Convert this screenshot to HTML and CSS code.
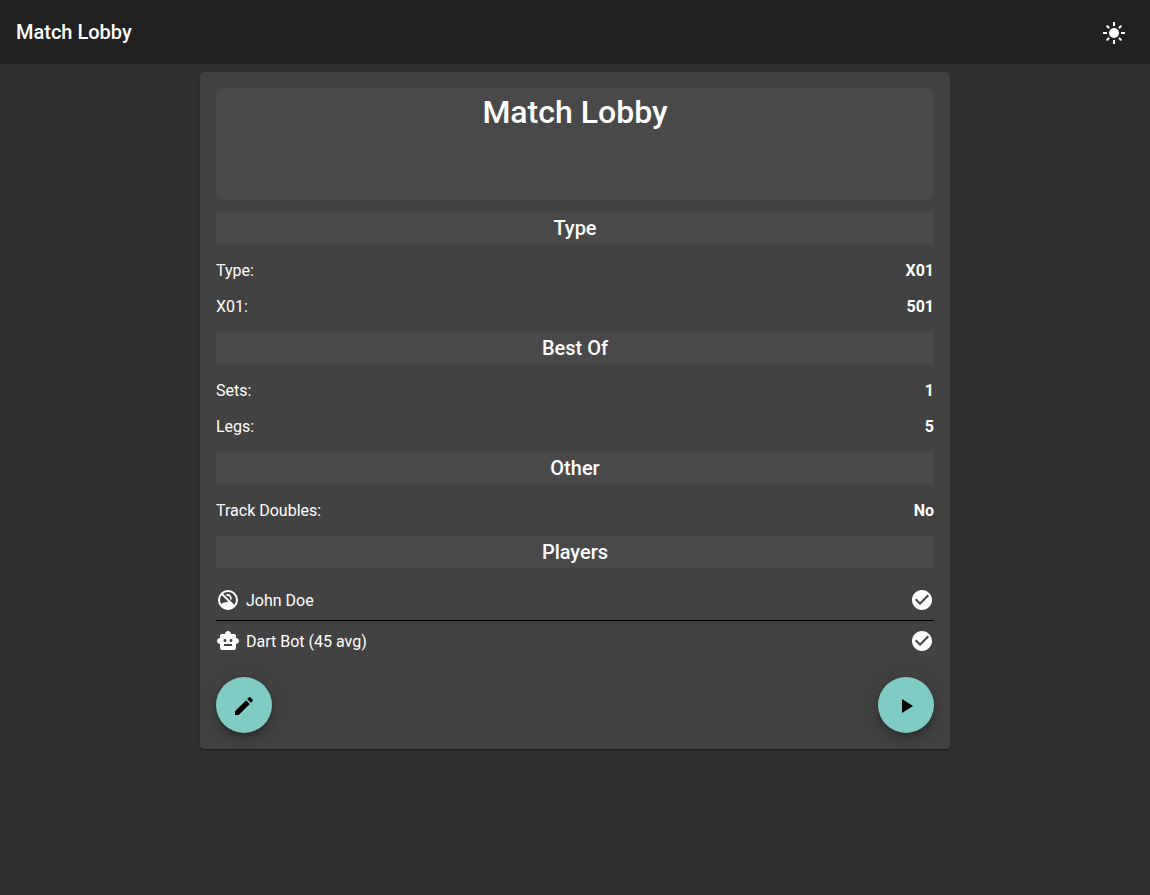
FILE: index.html
```html
<!DOCTYPE html>
<html lang="en">
<head>
<meta charset="utf-8">
<meta name="viewport" content="width=device-width, initial-scale=1">
<title>Match Lobby</title>
<link rel="stylesheet" href="styles.css">
</head>
<body>
<header class="toolbar">
  <span class="toolbar-title">Match Lobby</span>
  <button class="icon-button" type="button" aria-label="Toggle theme">
    <svg class="icon" viewBox="0 0 24 24"><circle cx="12" cy="12" r="5"/><path d="M11 1h2v4h-2zM11 19h2v4h-2zM1 11h4v2H1zM19 11h4v2h-4z"/><path d="M5.300 5.300l1.200 1.200M17.500 17.500l1.200 1.200M5.300 18.700l1.200-1.200M17.500 6.500l1.200-1.200" stroke="currentColor" stroke-width="2.200" stroke-linecap="round"/></svg>
  </button>
</header>
<main class="page">
  <section class="card">
    <div class="banner"><h1 class="banner-title">Match Lobby</h1></div>
    <h2 class="section-title">Type</h2>
    <dl class="settings">
      <div class="setting"><dt>Type:</dt><dd>X01</dd></div>
      <div class="setting"><dt>X01:</dt><dd>501</dd></div>
    </dl>
    <h2 class="section-title">Best Of</h2>
    <dl class="settings">
      <div class="setting"><dt>Sets:</dt><dd>1</dd></div>
      <div class="setting"><dt>Legs:</dt><dd>5</dd></div>
    </dl>
    <h2 class="section-title">Other</h2>
    <dl class="settings">
      <div class="setting"><dt>Track Doubles:</dt><dd>No</dd></div>
    </dl>
    <h2 class="section-title">Players</h2>
    <ul class="players">
      <li class="player">
        <svg class="icon" viewBox="0 0 24 24"><g fill="none" stroke="currentColor" stroke-width="2"><circle cx="12" cy="12" r="9"/><path d="M5.500 5.500l13 13"/><path d="M10.500 7.200c2.700-.9 5.100 1.300 4.300 4.300" stroke-width="1.800"/></g><path d="M4.500 16.500C6.500 14.700 9 14 12 14l2.200.2 5.300 3.300C17.800 20.200 15.200 21.500 12 21.500s-5.800-1.800-7.500-5z"/></svg>
        <span class="player-name">John Doe</span>
        <svg class="icon" viewBox="0 0 24 24"><path d="M12 2C6.480 2 2 6.480 2 12s4.480 10 10 10 10-4.480 10-10S17.520 2 12 2zm-2 15l-5-5 1.410-1.410L10 14.170l7.590-7.590L19 8l-9 9z"/></svg>
      </li>
      <li class="player">
        <svg class="icon" viewBox="0 0 24 24"><path d="M20 9V7c0-1.100-.9-2-2-2h-3c0-1.660-1.340-3-3-3S9 3.340 9 5H6c-1.100 0-2 .9-2 2v2c-1.660 0-3 1.340-3 3s1.340 3 3 3v4c0 1.100.9 2 2 2h12c1.100 0 2-.9 2-2v-4c1.660 0 3-1.340 3-3s-1.340-3-3-3zM7.500 11.500c0-.83.670-1.500 1.500-1.500s1.500.670 1.500 1.500S9.830 13 9 13s-1.500-.670-1.500-1.500zM16 17H8v-2h8v2zm-1-4c-.83 0-1.500-.670-1.500-1.500S14.170 10 15 10s1.500.670 1.500 1.500S15.830 13 15 13z"/></svg>
        <span class="player-name">Dart Bot (45 avg)</span>
        <svg class="icon" viewBox="0 0 24 24"><path d="M12 2C6.480 2 2 6.480 2 12s4.480 10 10 10 10-4.480 10-10S17.520 2 12 2zm-2 15l-5-5 1.410-1.410L10 14.170l7.590-7.590L19 8l-9 9z"/></svg>
      </li>
    </ul>
    <div class="actions">
      <button class="fab" type="button" aria-label="Edit match">
        <svg class="icon" viewBox="0 0 24 24"><path d="M3 17.250V21h3.750L17.810 9.940l-3.750-3.750L3 17.250zM20.710 7.040a1 1 0 0 0 0-1.410l-2.340-2.340a1 1 0 0 0-1.410 0l-1.830 1.830 3.750 3.750 1.830-1.830z"/></svg>
      </button>
      <button class="fab" type="button" aria-label="Start match">
        <svg class="icon" viewBox="0 0 24 24"><path d="M8 5v14l11-7z"/></svg>
      </button>
    </div>
  </section>
</main>
</body>
</html>
```
FILE: styles.css
```css
* { box-sizing: border-box; }
body {
  margin: 0;
  min-height: 100vh;
  background: #303030;
  color: #fff;
  font: 400 16px/24px Roboto, "Liberation Sans", sans-serif;
}
h1, h2, dl, dd, ul { margin: 0; padding: 0; }
button { border: 0; cursor: pointer; font: inherit; }
.icon { display: block; width: 24px; height: 24px; flex: none; fill: currentColor; }
.toolbar {
  display: flex;
  align-items: center;
  justify-content: space-between;
  min-height: 64px;
  padding: 0 16px;
  background: #212121;
}
.toolbar-title { font-size: 20px; font-weight: 500; line-height: 32px; }
.icon-button, .fab {
  display: grid;
  place-items: center;
  padding: 2px 0 0;
  border-radius: 50%;
}
.icon-button {
  width: 40px;
  height: 40px;
  background: transparent;
  color: inherit;
}
.page { padding: 8px; }
.card {
  max-width: 750px;
  margin: 0 auto;
  padding: 16px;
  border-radius: 4px;
  background: #424242;
  box-shadow: 0 2px 1px -1px rgba(0, 0, 0, .2), 0 1px 1px rgba(0, 0, 0, .14), 0 1px 3px rgba(0, 0, 0, .12);
}
.banner {
  min-height: 112px;
  padding: 4px 16px;
  margin-bottom: 12px;
  border-radius: 8px;
  background: #494949;
  text-align: center;
}
.banner-title { font-size: 32px; font-weight: 500; line-height: 40px; }
.section-title {
  background: #494949;
  font-size: 20px;
  font-weight: 500;
  line-height: 32px;
  text-align: center;
}
.settings { padding: 8px 0; }
.setting {
  display: flex;
  justify-content: space-between;
  padding: 8px 0 6px;
  line-height: 22px;
}
.setting dd { font-weight: 700; }
.players { padding-top: 12px; list-style: none; }
.player { display: flex; align-items: center; gap: 6px; padding: 8px 0; }
.player + .player { border-top: 1px solid #000; }
.player-name { flex: 1; padding-top: 2px; line-height: 22px; }
.actions { display: flex; justify-content: space-between; padding-top: 16px; }
.fab {
  width: 56px;
  height: 56px;
  background: #80cbc4;
  color: #000;
  box-shadow: 0 3px 5px -1px rgba(0, 0, 0, .2), 0 6px 10px rgba(0, 0, 0, .14), 0 1px 18px rgba(0, 0, 0, .12);
}
```
